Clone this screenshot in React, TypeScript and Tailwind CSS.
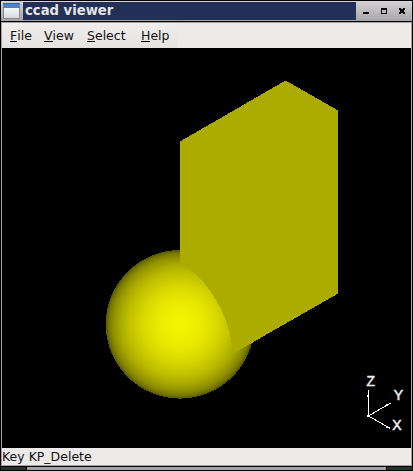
const menus = ["File", "View", "Select", "Help"];
const menuWidths = ["w-[34px]", "w-[43px]", "w-[54px]", "w-[43px]"];

function TitleBar() {
  return (
    <div className="flex h-5 shrink-0 border-y border-t-[#d8d4d8] border-b-[#a5a2a7] bg-linear-to-b from-[#d3cfd2] to-[#aaa8aa]">
      <div className="flex w-[22px] items-center pl-0.5">
        <svg width="18" height="16" viewBox="0 0 18 16" shapeRendering="crispEdges">
          <defs>
            <linearGradient id="pane" x2="0" y2="1">
              <stop stopColor="#f7f7f7" />
              <stop offset="1" stopColor="#d5d9df" />
            </linearGradient>
          </defs>
          <rect x="0" y="1" width="17" height="15" fill="#8a8884" />
          <rect x="0" y="0" width="17" height="5" fill="#4a86c8" />
          <rect x="0" y="0" width="17" height="1" fill="#3568a8" />
          <rect x="1" y="5" width="15" height="10" fill="url(#pane)" />
        </svg>
      </div>
      <div className="flex w-[333px] items-center bg-[#223057] pl-[2px] text-[13.2px] leading-[18px] font-bold text-[#e5e5e5]">
        <span className="whitespace-pre">ccad viewer</span>
      </div>
      <svg width="55" height="18" viewBox="0 0 55 18" shapeRendering="crispEdges">
        <path d="M7 10h6v2H7z" fill="#000" />
        <path d="M25 6h6v6h-6zM26 8v3h4V8z" fill="#000" fillRule="evenodd" />
        <path d="M43 6h2v1h2V6h2v2h-1v2h1v2h-2v-1h-2v1h-2v-2h1V8h-1z" fill="#000" />
      </svg>
    </div>
  );
}

function MenuBar() {
  return (
    <div className="flex h-[25px] shrink-0 bg-[#ecebe9]">
      <div className="flex w-[176px] items-center bg-linear-to-b from-[#efeeec] to-[#e4e3e1] pl-2 text-[12.5px] leading-4 text-[#111]">
        {menus.map((name, i) => (
          <div key={name} className={`${menuWidths[i]} shrink-0 whitespace-nowrap`}>
            <span className="inline-block border-b border-black leading-[11px]">{name[0]}</span>
            {name.slice(1)}
          </div>
        ))}
      </div>
    </div>
  );
}

function Viewport() {
  return (
    <svg width="409" height="400" viewBox="2 48 409 400" className="block shrink-0 bg-black">
      <defs>
        <radialGradient id="shade" gradientUnits="userSpaceOnUse" cx="180" cy="324.3" r="74.3">
          <stop offset="0" stopColor="#f5f500" />
          <stop offset=".3" stopColor="#eaea00" />
          <stop offset=".5" stopColor="#d9d900" />
          <stop offset=".7" stopColor="#bebe00" />
          <stop offset=".8" stopColor="#aaaa00" />
          <stop offset=".9" stopColor="#8f8f00" />
          <stop offset=".96" stopColor="#757500" />
          <stop offset="1" stopColor="#555500" />
        </radialGradient>
      </defs>
      <g shapeRendering="crispEdges">
        <circle cx="180" cy="324.3" r="74.3" fill="url(#shade)" />
        <path d="M180 141.5L285.5 80.5L338 110.5V293.5L232.5 354Q232 335 224.5 317Q217 299 205 284Q194 271 180 263Z" fill="#abab00" />
        <path d="M368.5 390V416L390.5 403M368.5 416L390.5 428.5" fill="none" stroke="#fff" />
        <path d="M367 415h3v2h-3zM386 404h2v2h-2zM386 426h2v2h-2zM367 395h1v2h-1z" fill="#fff" />
      </g>
      <g fill="#eee" stroke="#eee" strokeWidth=".5" className="font-['Liberation_Sans',sans-serif] text-[14px]">
        <text x="366.5" y="386">Z</text>
        <text x="393.8" y="400">Y</text>
        <text x="392.3" y="430">X</text>
      </g>
    </svg>
  );
}

export default function App() {
  return (
    <div className="flex h-[471px] w-[413px] flex-col overflow-hidden bg-black pt-px font-['DejaVu_Sans',sans-serif]">
      <div className="ml-px flex w-[411px] flex-col">
        <TitleBar />
        <div className="mt-px flex h-[444px] flex-col border border-[#a5a2a7]">
          <MenuBar />
          <Viewport />
          <div className="h-[17px] shrink-0 bg-[#ecebe9] text-[12.5px] leading-[17px] text-[#111]">Key KP_Delete</div>
        </div>
        <div className="mt-px flex h-[3px] gap-px">
          <div className="w-[25px] bg-[#22342b]" />
          <div className="flex-1 bg-[#a5a2a7]" />
          <div className="w-[25px] bg-[#22342b]" />
        </div>
      </div>
    </div>
  );
}
